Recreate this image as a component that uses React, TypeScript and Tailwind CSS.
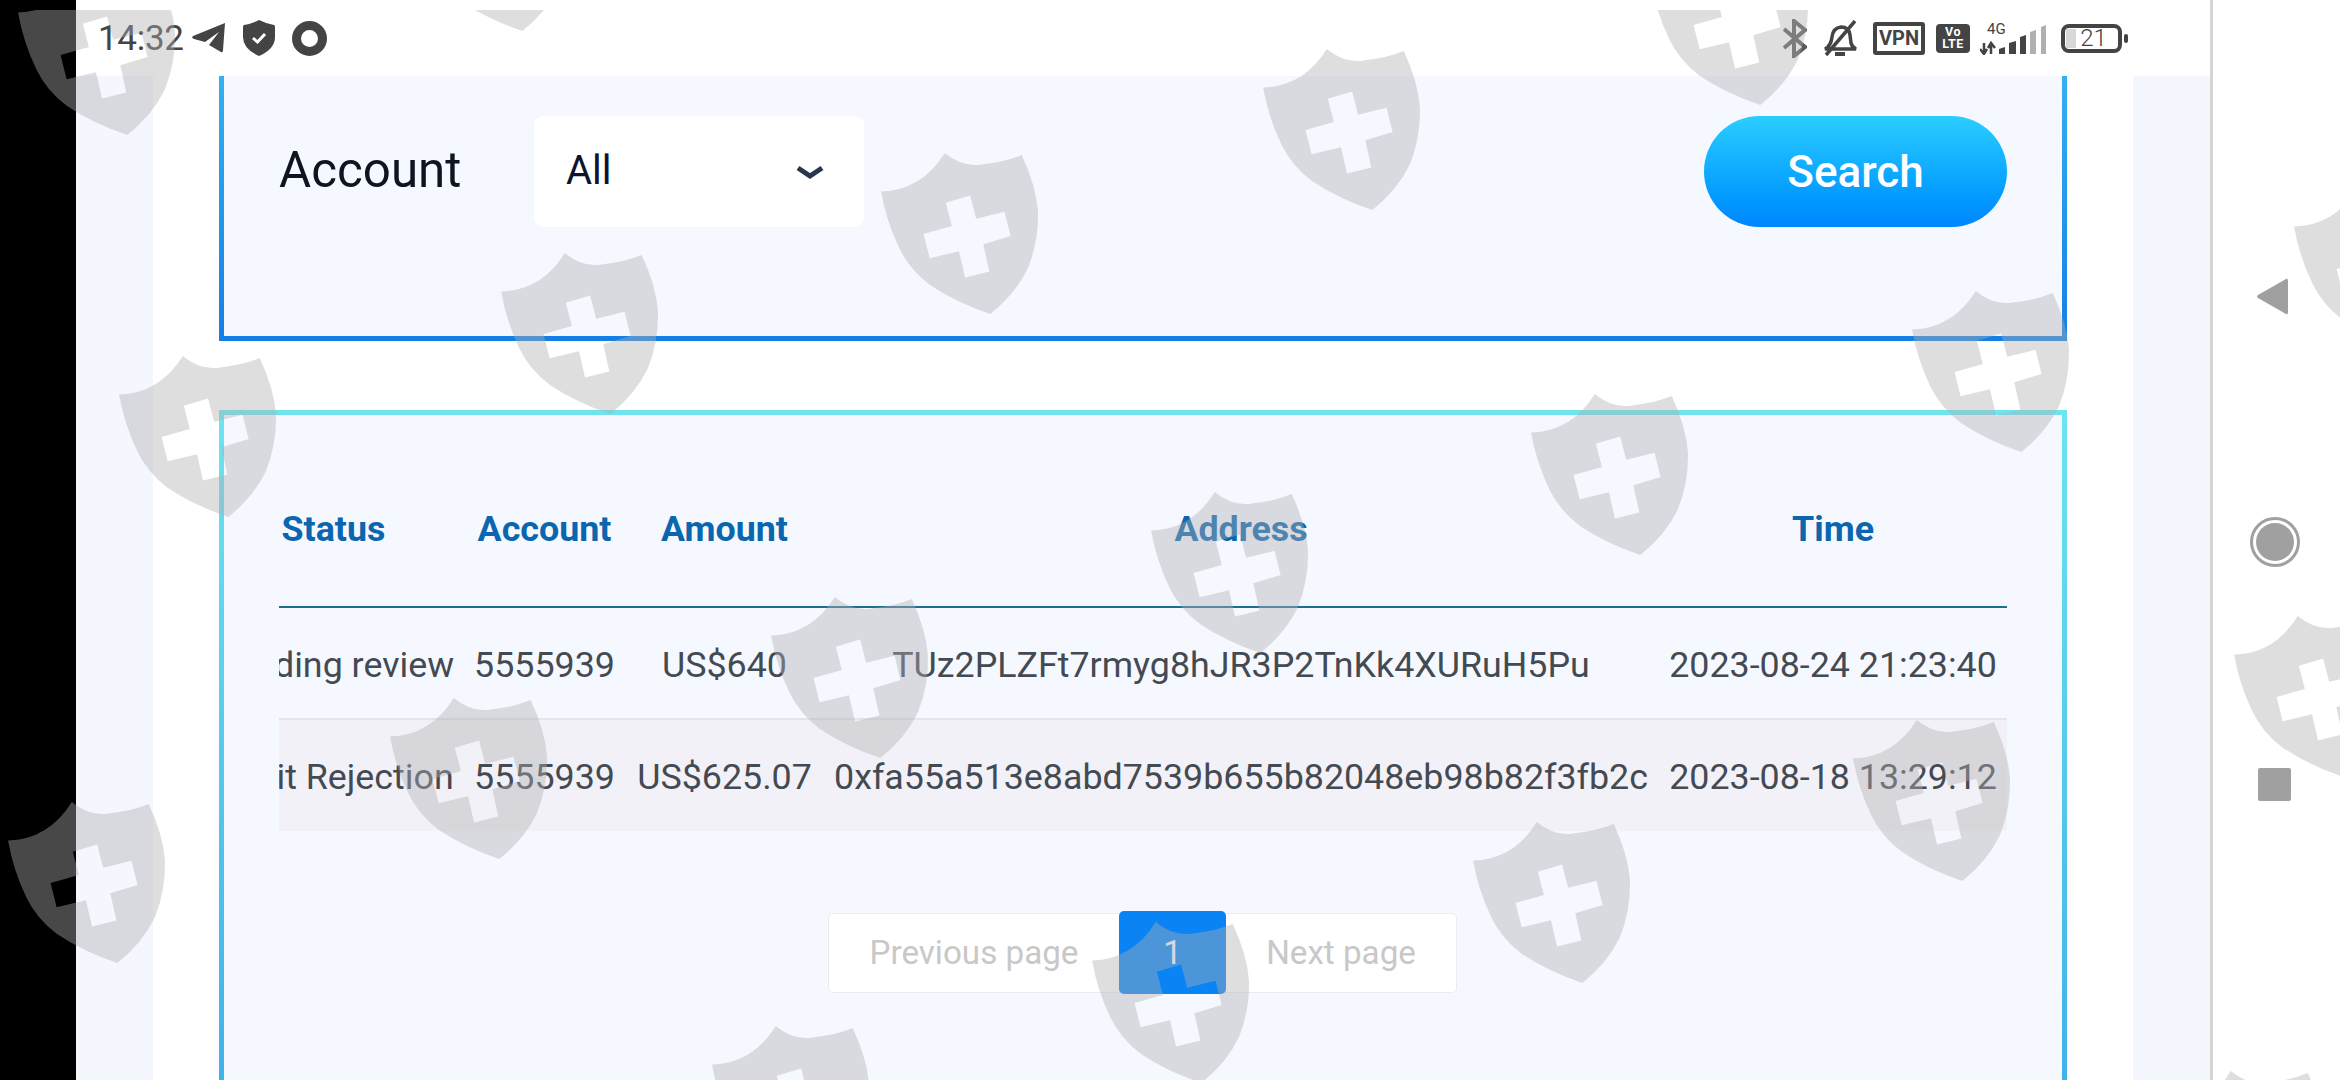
const ROBOTO = "font-['Roboto',sans-serif]";

const rows = [
  { status: "Pending review", account: "5555939", amount: "US$640", address: "TUz2PLZFt7rmyg8hJR3P2TnKk4XURuH5Pu", time: "2023-08-24 21:23:40" },
  { status: "Audit Rejection", account: "5555939", amount: "US$625.07", address: "0xfa55a513e8abd7539b655b82048eb98b82f3fb2c", time: "2023-08-18 13:29:12" },
];

// centre of each shield on the page
const shields = [
  [97, 52], [492, -52],
  [1730, 22], [1342, 127], [960, 231], [580, 331], [198, 434],
  [2373, 266], [1991, 369], [1610, 472], [1230, 570], [850, 675], [469, 776], [87, 880],
  [2313, 694], [1932, 798], [1552, 900], [1171, 1000], [791, 1104],
  [2246, 1149],
];

const Watermarks = () => (
  <div className="absolute left-0 right-0 top-[10px] bottom-0 overflow-hidden pointer-events-none">
    <svg width="2340" height="1070" viewBox="0 10 2340 1070" fill="none">
      <defs>
        <path
          id="shield"
          fillRule="evenodd"
          d="M-15 -77 Q3 -62 23 -66 Q44 -68 61 -75 Q75 -45 77 -20 Q78 10 67 37 Q55 62 30 82 Q-5 70 -30 53 Q-50 38 -60 17 Q-73 -10 -78 -39 Q-38 -40 -15 -77 Z M-14 -28 L10 -35 L16 -12 L44 -19 L50 5 L23 13 L29 40 L5 46 L-1 20 L-30 27 L-36 3 L-8 -5 Z"
        />
      </defs>
      {shields.map(([x, y]) => (
        <use
          key={`${x}-${y}`}
          href="#shield"
          transform={`translate(${x} ${y}) scale(1.012)`}
          fill="#aeaeb2"
          fillOpacity="0.41"
          fillRule="evenodd"
        />
      ))}
    </svg>
  </div>
);

const StatusBar = () => (
  <div className={`h-[76px] bg-white flex items-center justify-between pl-[22px] pr-[82px] text-[#444] ${ROBOTO}`}>
    <div className="flex items-center">
      <span className="text-[35px] leading-none tracking-[-0.3px]">14:32</span>
      <svg className="ml-[8px]" width="33" height="30" viewBox="0 0 33 30" fill="#444">
        <path d="M33 0 L1 13 Q-1 15 2 16 L13 19 L27 9 L17 22 L29 29 Q31 30 31 27 Z" />
      </svg>
      <svg className="ml-[18px]" width="32" height="36" viewBox="0 0 32 36">
        <path d="M16 0 Q24 4 31 5 Q32 5 32 7 V17 Q32 29 16 36 Q0 29 0 17 V7 Q0 5 1 5 Q8 4 16 0 Z" fill="#444" />
        <path d="M10 18 L14.5 22 L22 14" stroke="#fff" strokeWidth="3" fill="none" />
      </svg>
      <div className="ml-[17px] w-[35px] h-[35px] rounded-full border-[9px] border-[#444]" />
    </div>
    <div className="flex items-center">
      <svg width="24" height="39" viewBox="0 0 24 39" fill="none" stroke="#5a5a5a" strokeWidth="4">
        <path d="M1 10 L22 28 L11 37 V2 L22 11 L1 29" />
      </svg>
      <svg className="ml-[16px]" width="35" height="37" viewBox="0 0 35 37" fill="none" stroke="#444" strokeWidth="3.5">
        <path d="M2 29 Q8 26 9 17 Q10 8 18 7 Q26 7 27 15 L28 23 Q29 27 33 29 Z" />
        <path d="M12 34 H22" strokeWidth="4" />
        <path d="M3 35 L32 1" />
      </svg>
      <div className="ml-[15px] w-[52px] h-[33px] rounded-[3px] border-[4px] border-[#444] flex items-center justify-center text-[20px] font-bold leading-none">
        VPN
      </div>
      <div className="ml-[11px] w-[34px] h-[29px] rounded-[4px] bg-[#444] text-white flex flex-col items-center justify-center text-[12.5px] font-bold leading-[12px] tracking-[0.5px]">
        <span>Vo</span>
        <span>LTE</span>
      </div>
      <div className="ml-[10px] w-[66px] h-[34px] relative">
        <span className="absolute left-[7px] top-[1px] text-[15px] leading-none">4G</span>
        <svg className="absolute left-0 top-0" width="66" height="34" viewBox="0 0 66 34">
          <path d="M4 22 V33 M0 28 L4 33 L7 28 M11 33 V22 M8 27 L11 22 L15 27" stroke="#444" strokeWidth="2.5" fill="none" />
          <path d="M19 33 V28 L25 26 V33 Z M29 33 V22 L36 20 V33 Z M40 33 V16 L46 14 V33 Z" fill="#444" />
          <path d="M50 33 V11 L56 9 V33 Z M61 33 V6 L66 4 V33 Z" fill="#b0b0b0" />
        </svg>
      </div>
      <div className="ml-[15px] w-[61px] h-[29px] rounded-[8px] border-[4px] border-[#444] relative flex items-center justify-center text-[24px] font-light leading-none">
        <div className="absolute left-[1px] top-[1px] bottom-[1px] w-[10px] bg-[#d8d8d8]" />
        <span className="relative pl-[4px]">21</span>
      </div>
      <div className="ml-[2px] w-[4px] h-[9px] rounded-[2px] bg-[#444]" />
    </div>
  </div>
);

const Pagination = () => (
  <div className={`mt-[80px] pr-[1px] flex justify-center items-center text-[33.2px] leading-none text-[#c8c8c8] ${ROBOTO}`}>
    <div className="h-[80px] w-[291px] bg-white border border-[#ececf0] border-r-0 rounded-l-[5px] flex items-center justify-center">
      Previous page
    </div>
    <div className="h-[83px] w-[107px] bg-[#0a84f5] rounded-[5px] text-[#f0f6ff] flex items-center justify-center">1</div>
    <div className="h-[80px] w-[231px] bg-white border border-[#ececf0] border-l-0 rounded-r-[5px] flex items-center justify-center">
      Next page
    </div>
  </div>
);

export default function App() {
  return (
    <div className="relative w-[2340px] h-[1080px] overflow-hidden flex bg-white">
      <div className="w-[76px] bg-black" />

      <div className="w-[2134px] flex flex-col">
        <StatusBar />
        <div className="flex-1 min-h-0 bg-[#f4f7fe] px-[77px]">
          <div className="h-full bg-white px-[66px]">
            <div className="h-[265px] bg-[#f5f9ff] border-x-[5px] border-b-[5px] [border-image:linear-gradient(#35b0f0,#1480e6)_1] flex items-start justify-between pl-[55px] pr-[55px] pt-[40px]">
              <div className="flex items-center">
                <span className={`w-[255px] text-[49.3px] leading-[109px] pb-[2px] text-[#0e1420] ${ROBOTO}`}>Account</span>
                <div className="w-[330px] h-[111px] bg-white rounded-[9px] flex items-center justify-between pl-[32px] pr-[40px]">
                  <span className={`text-[40px] leading-none pb-[2px] text-[#0e1330] ${ROBOTO}`}>All</span>
                  <svg width="28" height="14" viewBox="0 0 28 14" fill="none" stroke="#2a3550" strokeWidth="5">
                    <path d="M2 3 L14 11 L26 3" />
                  </svg>
                </div>
              </div>
              <button className={`w-[303px] h-[111px] rounded-full bg-gradient-to-b from-[#2bcdff] to-[#0086ff] text-white text-[44px] font-medium leading-none ${ROBOTO}`}>
                Search
              </button>
            </div>

            <div className="mt-[69px] h-[700px] bg-[#f5f9ff] border-x-[5px] border-t-[5px] [border-image:linear-gradient(#6fe3ee,#3db0ea)_1] pl-[55px] pr-[55px] pt-[38px]">
              <div className="overflow-hidden">
                <table className={`ml-[-75px] w-[1803px] table-fixed border-collapse text-[35.8px] text-[#444a52] ${ROBOTO}`}>
                  <colgroup>
                    <col className="w-[259px]" />
                    <col className="w-[163px]" />
                    <col className="w-[197px]" />
                    <col className="w-[836px]" />
                    <col className="w-[348px]" />
                  </colgroup>
                  <thead>
                    <tr className="h-[154px] border-b-2 border-[#1d6f8e] text-[#0b66b0] font-bold">
                      <th>Status</th>
                      <th>Account</th>
                      <th>Amount</th>
                      <th>Address</th>
                      <th>Time</th>
                    </tr>
                  </thead>
                  <tbody>
                    {rows.map((row, i) => (
                      <tr key={row.time} className={`h-[112px] text-center whitespace-nowrap ${i === 1 ? "bg-[#f3f1f8] border-t-2 border-[#e4e5ea]" : ""}`}>
                        <td className="pt-[5px]">{row.status}</td>
                        <td className="pt-[5px]">{row.account}</td>
                        <td className="pt-[5px]">{row.amount}</td>
                        <td className="pt-[5px]">{row.address}</td>
                        <td className="pt-[5px]">{row.time}</td>
                      </tr>
                    ))}
                  </tbody>
                </table>
              </div>
              <Pagination />
            </div>
          </div>
        </div>
      </div>

      <div className="flex-1 bg-white border-l-[3px] border-[#d4d4d4] flex flex-col items-center pr-[4px]">
        <svg className="mt-[278px] mr-[3px]" width="32" height="37" viewBox="0 0 32 37" fill="#a0a0a0">
          <path d="M1 17 L29 1 Q31 0 31 3 V34 Q31 37 29 36 L1 20 Q-1 18.5 1 17 Z" />
        </svg>
        <div className="mt-[202px] w-[50px] h-[50px] rounded-full border-[3px] border-[#a0a0a0] flex items-center justify-center">
          <div className="w-[38px] h-[38px] rounded-full bg-[#a0a0a0]" />
        </div>
        <div className="mt-[201px] w-[33px] h-[33px] rounded-[2px] bg-[#a0a0a0]" />
      </div>

      <Watermarks />
    </div>
  );
}
